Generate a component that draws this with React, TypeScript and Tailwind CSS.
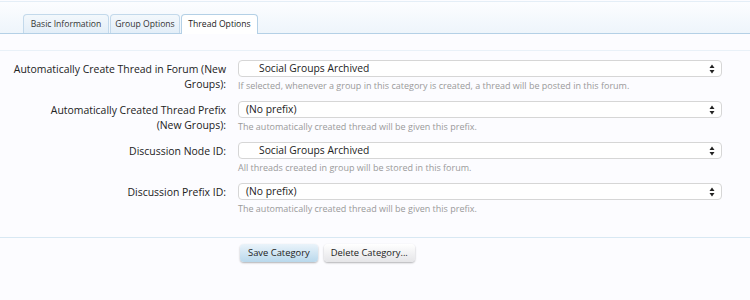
const rows = [
  {
    label: ['Automatically Create Thread in Forum (New', 'Groups):'],
    value: 'Social Groups Archived',
    indent: true,
    hint: 'If selected, whenever a group in this category is created, a thread will be posted in this forum.',
  },
  {
    label: ['Automatically Created Thread Prefix', '(New Groups):'],
    value: '(No prefix)',
    indent: false,
    hint: 'The automatically created thread will be given this prefix.',
  },
  {
    label: ['Discussion Node ID:'],
    value: 'Social Groups Archived',
    indent: true,
    hint: 'All threads created in group will be stored in this forum.',
  },
  {
    label: ['Discussion Prefix ID:'],
    value: '(No prefix)',
    indent: false,
    hint: 'The automatically created thread will be given this prefix.',
  },
];

const tabs = [
  { name: 'Basic Information', width: 'w-[86px]' },
  { name: 'Group Options', width: 'w-[70px]' },
  { name: 'Thread Options', width: 'w-[77px]' },
];

function SelectArrows() {
  return (
    <svg width="6" height="10" viewBox="0 0 6 10" className="shrink-0">
      <path d="M3 0.5 L5.5 4 L0.5 4 Z" fill="#222" />
      <path d="M3 9.5 L5.5 6 L0.5 6 Z" fill="#222" />
    </svg>
  );
}

export default function App() {
  return (
    <div
      className="h-[300px] w-[750px] overflow-hidden bg-[#fcfcff] text-[#222]"
      style={{ fontFamily: '"Open Sans", "DejaVu Sans", sans-serif' }}
    >
      <div className="h-[2px] border-b border-[#e4eef7]" />
      <div className="flex h-[32px] items-end gap-[1px] border-b border-[#b4d0e6] bg-gradient-to-b from-[#fcfdff] to-[#eef5fb] pl-[23px]">
        {tabs.map((t, i) => {
          const active = i === 2;
          return (
            <div
              key={t.name}
              className={
                t.width +
                (active
                  ? ' -mb-px flex h-[20px] items-center justify-center whitespace-nowrap rounded-t-[4px] border border-b-0 border-[#b4d0e6] bg-white text-[8.6px] text-[#222]'
                  : ' flex h-[19px] items-center justify-center whitespace-nowrap rounded-t-[4px] border border-b-0 border-[#c3d9eb] bg-gradient-to-b from-[#f3f8fc] to-[#e3eef8] text-[8.6px] text-[#333]')
              }
            >
              {t.name}
            </div>
          );
        })}
      </div>
      <div className="h-[17px] border-b border-[#e9f1f8]" />

      <div className="flex flex-col pt-[9px]">
        {rows.map((r) => (
          <div key={r.label.join(' ')} className="flex h-[41px]">
            <div className="w-[238px] pr-[12px] pt-[2px] text-right text-[10.45px] leading-[15px] text-[#222]">
              {r.label.map((l) => (
                <div key={l}>{l}</div>
              ))}
            </div>
            <div className="flex w-[484px] flex-col">
              <div className="flex h-[17px] items-center justify-between rounded-[4px] border border-[#d6d6d6] bg-white pr-[6px] text-[10.3px]">
                <span className={r.indent ? 'pl-[20px]' : 'pl-[7px]'}>{r.value}</span>
                <SelectArrows />
              </div>
              <div className="pt-[3px] text-[9px] leading-[12px] text-[#9a9a9a]">{r.hint}</div>
            </div>
          </div>
        ))}
      </div>

      <div className="mt-[13px] border-t border-[#d8e8f3]" />
      <div className="flex gap-[6px] pl-[240px] pt-[6px]">
        <button className="h-[18px] rounded-[4px] bg-gradient-to-b from-[#eaf3fa] to-[#b9d8ec] px-[8px] text-[9.4px] text-[#222] shadow-[0_1px_2px_rgba(0,0,0,0.3)]">
          Save Category
        </button>
        <button className="h-[18px] rounded-[4px] bg-gradient-to-b from-[#ffffff] to-[#e5e5e8] px-[7px] text-[9.4px] text-[#222] shadow-[0_1px_2px_rgba(0,0,0,0.3)]">
          Delete Category...
        </button>
      </div>
    </div>
  );
}
